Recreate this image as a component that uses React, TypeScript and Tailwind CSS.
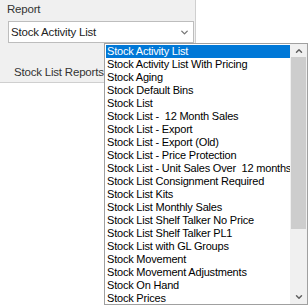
import { ChevronDown, ChevronUp } from "lucide-react";

const ITEMS = [
  "Stock Activity List",
  "Stock Activity List With Pricing",
  "Stock Aging",
  "Stock Default Bins",
  "Stock List",
  "Stock List -  12 Month Sales",
  "Stock List - Export",
  "Stock List - Export (Old)",
  "Stock List - Price Protection",
  "Stock List - Unit Sales Over  12 months",
  "Stock List Consignment Required",
  "Stock List Kits",
  "Stock List Monthly Sales",
  "Stock List Shelf Talker No Price",
  "Stock List Shelf Talker PL1",
  "Stock List with GL Groups",
  "Stock Movement",
  "Stock Movement Adjustments",
  "Stock On Hand",
  "Stock Prices",
];

const font = "font-['Liberation_Sans',Arial,sans-serif]";

export default function App() {
  return (
    <div className={`relative w-[308px] h-[307px] overflow-hidden bg-white ${font} text-[11px] tracking-[-0.2px]`}>
      {/* Report panel */}
      <div className="flex flex-col w-[196px] h-[83px] bg-[#f0f0f0] border-r border-b border-[#cfcfcf] pl-[7px] pt-[3px]">
        <span className="leading-[13px] text-[11.5px] text-[#333]">Report</span>
        <div className="mt-[5px] ml-[1px] flex items-center justify-between w-[186px] h-[22px] bg-white border border-[#bdbdbd] pl-[2px] pr-[3px]">
          <span className="leading-[13px] text-[11.5px] text-[#222]">Stock Activity List</span>
          <ChevronDown size={11} strokeWidth={3} className="text-[#777]" />
        </div>
        <span className="mt-[23px] ml-[7px] leading-[13px] text-[11.5px] text-[#333]">Stock List Reports</span>
      </div>

      {/* Dropdown list */}
      <div className="absolute left-[104px] top-[43px] w-[204px] h-[262px] flex bg-white border border-[#a0a0a0]">
        <div className="flex-1 min-w-0 overflow-hidden flex flex-col pl-[1px] pt-[1px]">
          {ITEMS.map((item, i) => (
            <div
              key={item}
              className={
                "h-[13px] leading-[13px] pl-[1px] whitespace-pre " +
                (i === 0 ? "bg-[#0078d7] text-white" : "text-black")
              }
            >
              {item}
            </div>
          ))}
        </div>
        <div className="w-[17px] shrink-0 flex flex-col bg-[#f0f0f0]">
          <div className="h-[13px] flex items-center justify-center">
            <ChevronUp size={10} strokeWidth={3.5} className="text-[#606060]" />
          </div>
          <div className="h-[172px] mx-[1px] bg-[#cdcdcd]" />
          <div className="flex-1" />
          <div className="h-[14px] flex items-center justify-center">
            <ChevronDown size={10} strokeWidth={3.5} className="text-[#606060]" />
          </div>
        </div>
      </div>
    </div>
  );
}
